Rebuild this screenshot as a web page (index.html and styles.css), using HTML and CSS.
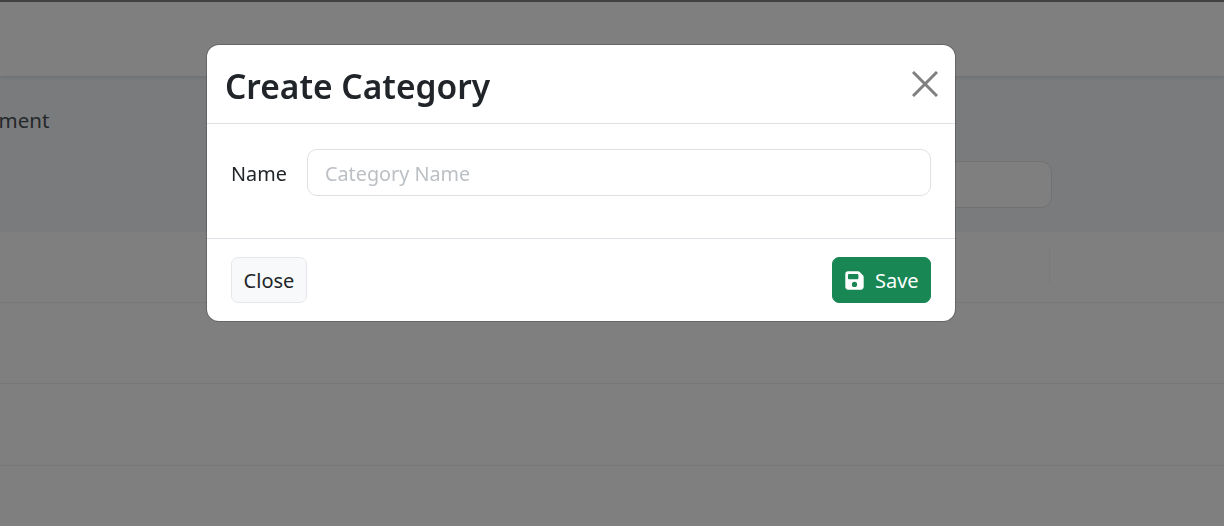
FILE: index.html
```html
<!DOCTYPE html>
<html lang="en">
<head>
<meta charset="utf-8">
<title>Create Category</title>
<link rel="stylesheet" href="styles.css">
</head>
<body>
<div class="page">
  <header class="navbar"></header>
  <section class="toolbar">
    <h2 class="page-title">Department</h2>
    <div class="search"></div>
  </section>
  <div class="table">
    <div class="row head"><span class="divider"></span></div>
    <div class="row tall"></div>
    <div class="row tall"></div>
    <div class="row last"></div>
  </div>
</div>
<div class="backdrop"></div>
<div class="modal">
  <div class="modal-header">
    <h1 class="modal-title">Create Category</h1>
    <button class="close" type="button" aria-label="Close">
      <svg viewBox="0 0 26 26" width="26" height="26"><path d="M1 1 L25 25 M25 1 L1 25" stroke="#808080" stroke-width="3" fill="none"/></svg>
    </button>
  </div>
  <div class="modal-body">
    <label class="label" for="name">Name</label>
    <input class="input" id="name" type="text" placeholder="Category Name">
  </div>
  <div class="modal-footer">
    <button class="btn btn-light" type="button">Close</button>
    <button class="btn btn-save" type="button">
      <svg viewBox="0 0 448 512" width="19" height="21"><path fill="#fff" d="M64 32C29 32 0 61 0 96v320c0 35 29 64 64 64h320c35 0 64-29 64-64V173c0-17-7-33-19-45l-77-77c-12-12-28-19-45-19H64zm0 96c0-18 14-32 32-32h192c18 0 32 14 32 32v64c0 18-14 32-32 32H96c-18 0-32-14-32-32v-64zm160 160a64 64 0 1 1 0 128 64 64 0 1 1 0-128z"/></svg>
      <span>Save</span>
    </button>
  </div>
</div>
</body>
</html>
```
FILE: styles.css
```css
* { box-sizing: border-box; }
html, body { margin: 0; height: 100%; overflow: hidden; }
body { font-family: "Noto Sans", "Open Sans", sans-serif; background: #f4f6f9; color: #212529; }
.page { height: 526px; display: flex; flex-direction: column; border-top: 2px solid #808080; }
.navbar { height: 74px; background: #fff; box-shadow: 0 1px 4px rgba(0,0,0,.12); flex: none; }
.toolbar { height: 156px; flex: none; display: flex; justify-content: space-between; align-items: flex-start; }
.page-title { margin: 30px 0 0 -68px; font-size: 20.5px; font-weight: 400; line-height: 28px; color: #495057; white-space: nowrap; }
.search { width: 400px; height: 47px; margin: 85px 172px 0 0; background: #fff; border: 1px solid #dee2e6; border-radius: 11px; }
.table { flex: 1; background: #fff; }
.row { border-bottom: 1px solid #f0f0f0; }
.head { height: 71px; display: flex; justify-content: flex-end; padding: 16px 174px 0 0; }
.divider { width: 1px; height: 35px; background: #f4f4f4; }
.tall { height: 81px; }
.tall + .tall { height: 82px; }
.last { border-bottom: 0; }
.backdrop { position: fixed; inset: 0; background: rgba(0,0,0,.5); }
.backdrop::before { content: ""; position: absolute; left: 0; right: 0; top: 0; height: 2px; background: #404040; }
.modal { position: fixed; left: 207px; top: 45px; width: 748px; height: 276px; background: #fff; border-radius: 12px; box-shadow: 0 0 0 1px rgba(0,0,0,.2); display: flex; flex-direction: column; }
.modal-header { height: 79px; flex: none; display: flex; justify-content: space-between; align-items: center; padding: 0 17px 0 18px; border-bottom: 1px solid #dee2e6; }
.modal-title { margin: 3px 0 0; font-size: 33.5px; font-weight: 600; line-height: 44px; color: #212529; }
.close { padding: 0; border: 0; background: none; display: flex; }
.modal-body { height: 115px; flex: none; display: flex; align-items: flex-start; padding: 25px 24px 0; border-bottom: 1px solid #dee2e6; }
.label { width: 76px; flex: none; font-size: 19.8px; line-height: 49px; color: #212529; }
.input { flex: 1; height: 47px; padding: 2px 17px 0; font: 19.8px "Noto Sans", sans-serif; border: 1px solid #dee2e6; border-radius: 10px; outline: 0; color: #212529; }
.input::placeholder { color: #bcc0c4; opacity: 1; }
.modal-footer { flex: 1; display: flex; justify-content: space-between; align-items: flex-start; padding: 18px 24px 0; }
.btn { height: 46px; display: inline-flex; align-items: center; font: 20px "Noto Sans", sans-serif; border-radius: 7px; border: 1px solid transparent; }
.btn-light { width: 76px; justify-content: center; padding: 0; background: #f8f9fa; border-color: #e5e7ea; color: #212529; }
.btn-save { width: 99px; padding: 0 0 0 12px; gap: 11px; background: #198754; color: #fff; border-color: #198754; }
```
